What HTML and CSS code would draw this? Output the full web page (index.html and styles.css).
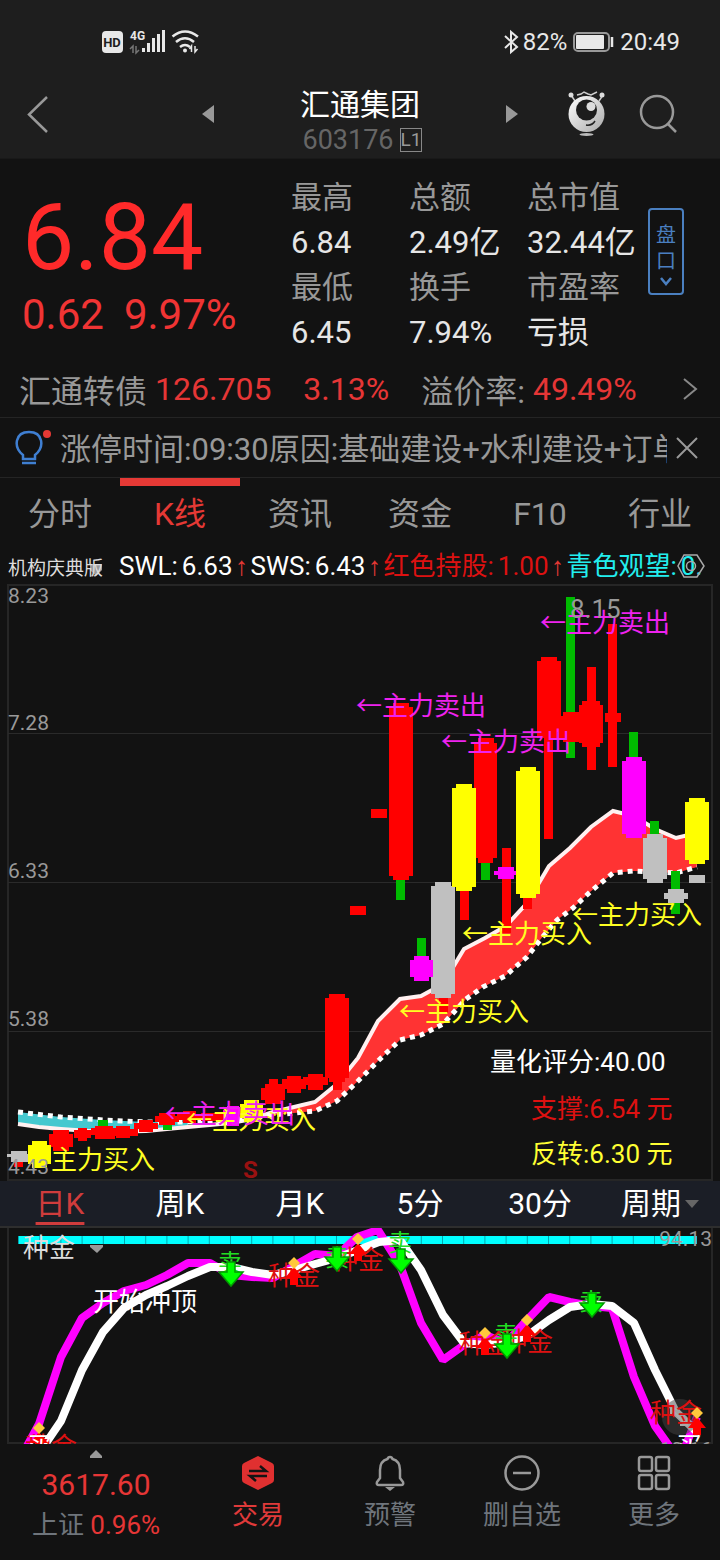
FILE: index.html
```
<!DOCTYPE html>
<html lang="zh-CN">
<head>
<meta charset="utf-8">
<meta name="viewport" content="width=device-width, initial-scale=1">
<title>汇通集团 603176</title>
<link rel="stylesheet" href="styles.css">
</head>
<body>
<header class="top">
  <div class="status">
    <svg class="status-left" width="100" height="28" viewBox="101 28 100 28" aria-hidden="true">
      <rect x="102" y="31" width="21" height="22" rx="4" fill="#e8e8e8"/>
      <text x="112" y="47" class="hd">HD</text>
      <text x="130" y="40" class="net">4G</text>
      <path d="M133 53v-7l-3 3M136 46v7l3-3" fill="none" stroke="#777" stroke-width="1.500"/>
      <path d="M143.500 52v-4M148.500 52v-9M153.500 52v-14M158.500 52v-18M163.500 52v-22" stroke="#e8e8e8" stroke-width="3"/>
      <path d="M172.500 36.500q12.500-10 25.500 0M176 42q9-7.500 18 0M180 47q5-4 10 0" fill="none" stroke="#e8e8e8" stroke-width="2.500"/>
      <circle cx="185" cy="50.500" r="2"/><path d="M191.500 52v-6l-2 3M195 46v6l2.500-3" fill="none" stroke="#e8e8e8" stroke-width="1.500"/>
    </svg>
    <div class="status-right">
      <svg width="17" height="26" viewBox="0 0 17 26" aria-hidden="true"><path d="M2 7l12 11-6 5V3l6 5L2 19" fill="none" stroke="#e8e8e8" stroke-width="2"/></svg>
      <span>82%</span>
      <svg class="battery" width="41" height="20" viewBox="0 0 41 20" aria-hidden="true"><rect x="1" y="1" width="35" height="18" rx="4" fill="none" stroke="#999" stroke-width="2"/><rect x="3" y="3" width="28" height="14" rx="1" fill="#e8e8e8"/><path d="M39 5v10" stroke="#e8e8e8" stroke-width="2.500"/></svg>
      <span>20:49</span>
    </div>
  </div>
  <div class="titlebar">
    <button class="icon back" aria-label="返回"><svg width="24" height="40" viewBox="0 0 24 40"><path d="M21 3L3 20.500 21 38" fill="none" stroke="#999" stroke-width="2.500"/></svg></button>
    <button class="icon prev" aria-label="上一只"><svg width="14" height="20" viewBox="0 0 14 20"><path d="M13 1v18L1 10z" fill="#999"/></svg></button>
    <div class="stock">
      <h1>汇通集团</h1>
      <div class="code">603176<span class="level">L1</span></div>
    </div>
    <button class="icon next" aria-label="下一只"><svg width="14" height="20" viewBox="0 0 14 20"><path d="M1 1v18l12-9z" fill="#999"/></svg></button>
    <button class="icon robot" aria-label="智能助手"><svg width="40" height="48" viewBox="0 0 40 48">
      <defs><linearGradient id="shell" x2="1" y2="1"><stop stop-color="#fff"/><stop offset="1" stop-color="#aaa"/></linearGradient></defs>
      <path d="M8 11L4 5M32 11l4-6M10 5l4-1 3-2 4 2 3 1 6-3" fill="none" stroke="#ccc" stroke-width="1.500"/>
      <circle cx="4" cy="5" r="2.500" fill="#ddd"/><circle cx="35" cy="5" r="2.500" fill="#ddd"/>
      <circle cx="19.500" cy="24" r="18" fill="url(#shell)"/><circle cx="19.500" cy="20" r="10.500" fill="#1d1d1d"/><circle cx="24" cy="16.500" r="4.500" fill="#ddd"/>
      <path d="M19 35q6 1 9-4" fill="none" stroke="#222" stroke-width="1.500"/><ellipse cx="19.500" cy="44.500" rx="7" ry="1.500" fill="#bbb"/>
    </svg></button>
    <button class="icon search" aria-label="搜索"><svg width="40" height="40" viewBox="0 0 40 40"><circle cx="18" cy="18" r="16" fill="none" stroke="#999" stroke-width="2.500"/><path d="M29 30l8 8" stroke="#999" stroke-width="2.500"/></svg></button>
  </div>
</header>

<main>
<section class="quote">
  <div class="price">
    <div class="last">6.84</div>
    <div class="change"><span>0.62</span><span>9.97%</span></div>
  </div>
  <dl class="stats">
    <div><dt>最高</dt><dd>6.84</dd></div>
    <div><dt>总额</dt><dd>2.49亿</dd></div>
    <div><dt>总市值</dt><dd>32.44亿</dd></div>
    <div><dt>最低</dt><dd>6.45</dd></div>
    <div><dt>换手</dt><dd>7.94%</dd></div>
    <div><dt>市盈率</dt><dd>亏损</dd></div>
  </dl>
  <button class="pankou"><span>盘</span><span>口</span><svg width="12" height="10" viewBox="0 0 12 10" aria-hidden="true"><path d="M1 2l5 6 5-6" fill="none" stroke="#4a7fc0" stroke-width="2.500"/></svg></button>
</section>

<a class="bond" href="#bond">
  <span>汇通转债</span><b>126.705</b><b class="rate">3.13%</b><span class="premium">溢价率:</span><b>49.49%</b>
  <svg class="chevron" width="16" height="24" viewBox="0 0 16 24" aria-hidden="true"><path d="M2 2l12 10L2 22" fill="none" stroke="#888" stroke-width="2"/></svg>
</a>

<div class="notice">
  <svg class="bulb" width="38" height="40" viewBox="0 0 38 40" aria-hidden="true"><path d="M9 31v-4C-1 19 1 4 15 4s16 15 6 23v4zM8 35h14" fill="none" stroke="#3f7fd2" stroke-width="2.500"/><circle cx="33" cy="6" r="4" fill="#e53935"/></svg>
  <p>涨停时间:09:30原因:基础建设+水利建设+订单</p>
  <button class="icon" aria-label="关闭"><svg width="24" height="24" viewBox="0 0 24 24"><path d="M2 2l20 20M22 2L2 22" stroke="#999" stroke-width="2"/></svg></button>
</div>

<nav class="tabs">
  <button>分时</button><button class="on">K线</button><button>资讯</button><button>资金</button><button>F10</button><button>行业</button>
</nav>

<div class="legend">
  <button class="scheme">机构庆典版<svg width="12" height="12" viewBox="0 0 12 12" aria-hidden="true"><path d="M0 0h12v6l-6 6-6-6z" fill="#999"/></svg></button>
  <span class="val">SWL:<i>6.63</i><em>↑</em></span>
  <span class="val">SWS:<i>6.43</i><em>↑</em></span>
  <span class="val hold">红色持股:<i>1.00</i><em>↑</em></span>
  <span class="val wait">青色观望:<i>0.</i></span>
  <button class="icon settings" aria-label="指标设置"><svg width="28" height="26" viewBox="0 0 28 26"><path d="M7 2h13l7 11-7 11H7L1 13z" fill="none" stroke="#aaa" stroke-width="1.500"/><circle cx="14" cy="13" r="4.500" fill="none" stroke="#aaa" stroke-width="1.500"/></svg></button>
</div>

<svg class="chart" viewBox="0 584 720 597" role="img" aria-label="日K线图">
  <g class="grid"><path d="M8 585h704v595H8z"/><path class="rule" d="M8 733.500h704M8 882.500h704M8 1031.500h704"/></g>
  <path fill="#ff3333" d="M188 1127L231 1123 252 1119 273 1112 294 1107 315 1102 337 1084 358 1058 378 1021 400 999 421 996 443 984 464 949 485 938 506 926 527 903 549 866 570 848 591 827 613 811 634 816 655 829 676 838 697 833V867L676 873 655 872 634 871 613 873 590 892 573 908 557 920 540 940 527 957 505 976 483 987 466 999 443 1024 421 1035 400 1040 379 1060 358 1081 337 1101 315 1111 273 1115 231 1120z"/>
  <path fill="#45c8cf" d="M18 1112L61 1117 103 1120 146 1122 188 1122V1127L146 1131 103 1132 61 1129 18 1124z"/>
  <path class="line" stroke="#fff0f0" d="M18 1124L39 1127 61 1129 103 1132 146 1131 188 1127 231 1123 252 1119 273 1112 294 1107 315 1102 337 1084 358 1058 378 1021 400 999 421 996 443 984 464 949 485 938 506 926 527 903 549 866 570 848 591 827 613 811 634 816 655 829 676 838 697 833"/>
  <path class="line dots" d="M18 1112L61 1117 103 1120 146 1122 188 1122 231 1120 273 1115 315 1111 337 1101 358 1081 379 1060 400 1040 421 1035 443 1024 466 999 483 987 505 976 527 957 540 940 557 920 573 908 590 892 613 873 634 871 655 872 676 873 697 867"/>
  <g class="axis"><text x="8" y="603">8.23</text><text x="8" y="730">7.28</text><text x="8" y="878">6.33</text><text x="8" y="1026">5.38</text></g>

  <g fill="#c0c0c0">
    <path d="M11 1151h16v3h4v8H11v-5H7v-3h4z"/>
    <path d="M435 882h16v4h4v108h-4v4h-16v-4h-4V886h4z"/>
    <path d="M647 834h16v4h4v41h-4v4h-16v-4h-4v-41h4z"/>
    <path d="M689 875h16v8h-16z"/>
  </g>
  <g fill="#ff0000">
    <path d="M14 1162h9v5h-9z"/>
    <path d="M53 1130h16v4h4v13h-4v4H53v-4h-4v-13h4zM74 1130h4v-2h9v2h4v8h-4v3h-9v-3h-4z"/>
    <path d="M91 1128h4v-2h18v2h7v7h-5v4H95v-4h-4zM112 1129h4v-3h14v3h8v7h-8v2h-14v-2h-4zM134 1123h5v-3h14v3h5v6h-5v3h-14v-3h-5z"/>
    <path d="M155 1116h4v-3h16v3h4v6h-4v3h-16v-3h-4zM177 1114h6v-3h13v3h8v6h-8v3h-13v-3h-6zM201 1113h24v8h-24z"/>
    <path d="M265 1084h4v-5h9v5h4v4h3v12h-4v4h-16v-4h-4v-12h4zM282 1079h5v-3h14v3h5v10h-5v4h-14v-4h-5zM303 1077h5v-3h15v3h5v8h-5v5h-15v-5h-5z"/>
    <path d="M329 994h16v4h4v80h-4v4h-3v8h-9v-8h-4v-4h-4v-80h4z"/>
    <path d="M350 906h16v9h-16zM371 809h16v9h-16zM393 703h16v4h4v169h-4v4h-16v-4h-4V707h4z"/>
    <path d="M478 738h16v5h3v115h-4v5h-15v-5h-4V743h4zM439 998h9v15h-9zM460 891h9v29h-9zM502 848h9v85h-9zM523 898h9v11h-9z"/>
    <path d="M541 657h16v4h4v71h-4v6h-4v101h-9V738h-7v-77h4z"/>
  </g>
  <g fill="#00bb00">
    <path d="M98 1120h10v6H98zM163 1125h9v5h-9zM396 880h9v20h-9zM417 938h9v19h-9zM481 863h9v17h-9zM566 597h9v161h-9zM629 732h9v26h-9zM650 821h9v13h-9zM671 871h9v43h-9z"/>
  </g>
  <g fill="#ff0000">
    <path d="M563 712h16v4h4v22h-4v4h-16v-4h-4v-22h4zM587 667h9v34h4v4h3v38h-3v4h-4v23h-9v-23h-5v-4h-3v-38h3v-4h5zM608 624h9v89h4v9h-4v45h-9v-45h-3v-9h3z"/>
  </g>
  <path fill="#c0c0c0" d="M668 889h16v4h4v6h-4v4h-16v-4h-4v-6h4z"/>
  <g fill="#ff00ff">
    <path d="M414 956h15v4h4v17h-4v4h-15v-4h-4v-17h4zM498 867h16v4h4v4h-4v4h-16v-4h-4v-4h4zM626 757h16v4h4v73h-4v4h-16v-4h-4v-73h4zM223 1110h4v-4h12v20h-12v-4h-4z"/>
  </g>
  <g fill="#ffff00">
    <path d="M32 1141h15v4h4v19h-4v4H32v-4h-4v-19h4zM244 1100h15v4h4v14h-4v4h-15v-4h-4v-14h4zM456 784h16v4h4v99h-4v4h-16v-4h-4v-99h4zM520 767h16v4h4v123h-4v4h-16v-4h-4V771h4zM689 798h16v4h4v58h-4v4h-16v-4h-4v-58h4z"/>
  </g>

  <g class="buy"><text x="462" y="943">←主力买入</text><text x="572" y="924">←主力买入</text><text x="399" y="1021">←主力买入</text><text x="186" y="1129">←主力买入</text><text x="51" y="1169">主力买入</text></g>
  <g class="sell"><text x="356" y="715">←主力卖出</text><text x="441" y="751">←主力卖出</text><text x="540" y="632">←主力卖出</text><text x="165" y="1123">←主力卖出</text></g>
  <text x="570" y="618" class="peak">8.15</text>
  <g class="axis"><text x="8" y="1174">4.43</text></g>
  <text x="243" y="1178" class="mark">S</text>
  <text x="490" y="1071" class="note" fill="#fff">量化评分:40.00</text>
  <text x="531" y="1118" class="note" fill="#dd1111">支撑:6.54 元</text>
  <text x="531" y="1163" class="note" fill="#ffff33">反转:6.30 元</text>
</svg>

<nav class="periods">
  <button class="on">日K</button><button>周K</button><button>月K</button><button>5分</button><button>30分</button><button>周期<svg width="14" height="8" viewBox="0 0 14 8" aria-hidden="true"><path d="M0 0h14L7 8z" fill="#666"/></svg></button>
</nav>

<svg class="chart" viewBox="0 1228 720 216" role="img" aria-label="种金指标">
  <defs>
    <path id="down" d="M-4 0h8v10h8L0 24-12 10h8z" fill="#00ff00" stroke="#009900" stroke-width="1.500"/>
    <g id="up"><path d="M0-2L9 9H4v7h-8V9h-5z" fill="#ff0000"/><path d="M0-12l6 6-6 6-6-6z" fill="#ffc83c"/></g>
  </defs>
  <g class="grid"><path d="M8 1228v215h704v-215"/></g>
  <path d="M18 1240h679" stroke="#00ffff" stroke-width="8"/>
  <path d="M18 1240h679" stroke="#00a8b0" stroke-width="8" stroke-dasharray="1 20.200"/>
  <path class="trend" stroke="#ff00ff" d="M27 1446L39 1424 61 1357 82 1318 103 1303 124 1291 146 1285 167 1275 188 1263 210 1263 231 1275 252 1277 273 1278 294 1266 315 1254 337 1256 357 1237 378 1230 400 1265 421 1323 443 1360 464 1345 485 1335 506 1343 527 1320 549 1297 570 1302 591 1306 612 1308 634 1377 655 1426 672 1450M684 1450L697 1417"/>
  <path class="trend" stroke="#ffffff" d="M44 1446L61 1421 82 1370 103 1332 124 1308 146 1295 167 1286 188 1276 210 1267 231 1267 252 1272 273 1275 294 1270 315 1264 337 1258 358 1250 379 1242 400 1240 421 1270 443 1315 464 1343 485 1345 506 1342 527 1336 549 1320 570 1307 591 1304 612 1306 634 1323 655 1370 676 1412 697 1432"/>
  <circle cx="680" cy="1417" r="18" fill="#444" opacity=".5"/>
  <path d="M671 1416v-7h7M671 1409l16 16M680 1425h7v-7" fill="none" stroke="#aaa" stroke-width="2"/>
  <g class="gold"><text x="268" y="1285">种金</text><text x="332" y="1269">种金</text><text x="459" y="1353">种金</text><text x="501" y="1351">种金</text><text x="650" y="1422">种金</text><text x="25" y="1456">种金</text></g>
  <use href="#up" x="39" y="1434"/><use href="#up" x="294" y="1269"/><use href="#up" x="358" y="1245"/><use href="#up" x="485" y="1339"/><use href="#up" x="527" y="1326"/><use href="#up" x="697" y="1419"/>
  <g class="out"><text x="230" y="1271">卖</text><text x="337" y="1266">卖</text><text x="400" y="1251">卖</text><text x="506" y="1343">卖</text><text x="591" y="1310">卖</text></g>
  <use href="#down" x="231" y="1262"/><use href="#down" x="337" y="1247"/><use href="#down" x="401" y="1249"/><use href="#down" x="507" y="1334"/><use href="#down" x="592" y="1293"/>
  <text x="93" y="1311" class="note" fill="#fff">开始冲顶</text>
  <text x="27" y="1456" class="note" fill="#fff">买</text><text x="676" y="1456" class="note" fill="#fff">买</text>
  <text x="23" y="1257" class="note" fill="#ddd">种金</text>
  <path d="M90 1245h13v2l-6 6-7-6z" fill="#999"/>
  <g class="axis end"><text x="712" y="1246">94.13</text><text x="712" y="1457">10.16</text></g>
</svg>
</main>

<footer class="dock">
  <button class="index">
    <svg width="12" height="8" viewBox="0 0 12 8" aria-hidden="true"><path d="M6 0l6 6v2H0V6z" fill="#999"/></svg>
    <span class="points">3617.60</span>
    <span class="pct">上证 <b>0.96%</b></span>
  </button>
  <button class="trade"><svg width="36" height="36" viewBox="0 0 36 36" aria-hidden="true"><path d="M18 1l14 7q2 1 2 3v14q0 2-2 3l-14 7-14-7q-2-1-2-3V11q0-2 2-3z" fill="#e03030"/><path d="M9 16h17l-6-5M27 21H10l6 5" fill="none" stroke="#141414" stroke-width="2.500"/></svg><span>交易</span></button>
  <button><svg width="36" height="36" viewBox="0 0 36 36" aria-hidden="true"><path d="M18 2q-2 0-2.500 2Q8 6 8 15v8l-3 4q-1 3 2 3h22q3 0 2-3l-3-4v-8q0-9-7.500-11-.5-2-2.500-2z" fill="none" stroke="#999" stroke-width="2.500"/><path d="M13 32h10l-5 4z" fill="#999"/></svg><span>预警</span></button>
  <button><svg width="36" height="36" viewBox="0 0 36 36" aria-hidden="true"><circle cx="18" cy="18" r="16.500" fill="none" stroke="#999" stroke-width="2.500"/><path d="M9 18h18" stroke="#999" stroke-width="2.500"/></svg><span>删自选</span></button>
  <button><svg width="36" height="36" viewBox="0 0 36 36" aria-hidden="true"><g fill="none" stroke="#999" stroke-width="2.500"><rect x="3" y="2" width="13" height="14" rx="2"/><rect x="20" y="2" width="13" height="14" rx="2"/><rect x="3" y="20" width="13" height="14" rx="2"/><rect x="20" y="20" width="13" height="14" rx="2"/></g></svg><span>更多</span></button>
</footer>
</body>
</html>
```

FILE: styles.css
```
* { box-sizing: border-box; }
body { margin: 0; background: #121212; color: #989898; font-family: Roboto, "Noto Sans CJK SC", sans-serif; font-size: 32px; }
button { padding: 0; border: 0; background: none; color: inherit; font: inherit; }
svg { display: block; flex: none; }
h1, p, dl, dd { margin: 0; }
b, i, em { font-weight: 400; font-style: normal; }

.top { background: #1e1e1e; border-bottom: 1px solid #191919; }
.status { display: flex; justify-content: space-between; align-items: center; height: 84px; padding: 0 40px 0 101px; }
.status-left { fill: #e8e8e8; }
.hd { font-size: 13px; font-weight: 700; fill: #1e1e1e; text-anchor: middle; }
.net { font-size: 12px; font-weight: 700; }
.status-right { display: flex; align-items: center; color: #e8e8e8; font-size: 24px; line-height: 28px; gap: 3px; }
.battery { margin: 0 3px; }
.titlebar { display: flex; align-items: center; height: 74px; padding: 0 41px 14px 26px; }
.icon { display: flex; align-items: center; justify-content: center; }
.prev { margin-left: auto; }
.stock { width: 290px; padding-top: 12px; text-align: center; }
.stock h1 { color: #fff; font-size: 30px; font-weight: 400; line-height: 40px; }
.code { display: flex; justify-content: center; align-items: center; gap: 6px; padding-left: 4px; color: #666; font-size: 27px; line-height: 30px; }
.level { width: 22px; border: 1px solid #888; color: #999; font-size: 19px; line-height: 22px; }
.robot { margin-left: 48px; }
.search { margin-left: 32px; }

.quote { display: grid; grid-template-columns: 291fr 357fr 72fr; padding: 16px 0 1px; }
.price { padding: 18px 0 0 22px; color: #ff2a2a; }
.last { font-size: 93px; line-height: 90px; }
.change { display: flex; gap: 20px; margin-top: 10px; font-size: 42px; line-height: 44px; color: #f03434; }
.stats { display: grid; grid-template-columns: 118fr 118fr 121fr; font-size: 31px; line-height: 45px; white-space: nowrap; }
.stats dd { color: #e6e6e6; }
.pankou { display: flex; flex-direction: column; align-items: center; width: 36px; height: 87px; margin-top: 33px; padding-top: 12px; border: 2px solid #4a7fc0; border-radius: 4px; color: #4a7fc0; font-size: 20px; line-height: 26px; }
.pankou svg { margin-top: 2px; }
.bond { display: flex; align-items: center; height: 62px; padding: 4px 22px 0 19px; border-bottom: 1px solid #242424; color: inherit; text-decoration: none; white-space: nowrap; }
.bond b { margin-left: 8px; color: #e63636; }
.bond .rate { margin-left: 32px; }
.premium { margin-left: 32px; }
.chevron { margin-left: auto; }

.notice { display: flex; align-items: center; height: 60px; padding: 0 21px 0 14px; border-bottom: 1px solid #242424; }
.bulb { margin-right: 8px; }
.notice p { flex: 1; overflow: hidden; margin-right: 8px; padding-top: 4px; font-size: 31px; line-height: 46px; white-space: nowrap; }

.tabs, .periods { display: grid; grid-template-columns: repeat(6, 1fr); }
.tabs button { height: 70px; padding-bottom: 6px; border-top: 8px solid transparent; line-height: 54px; }
.tabs .on { border-color: #e53935; color: #e53935; }

.legend { position: relative; display: flex; align-items: center; height: 36px; padding-left: 8px; color: #fff; font-size: 26px; white-space: nowrap; overflow: hidden; }
.scheme { position: relative; margin-right: 16px; color: #ddd; font-size: 19px; }
.scheme svg { position: absolute; right: 1px; bottom: 4px; z-index: -1; }
.val { display: flex; line-height: 36px; }
.val i { margin-left: 4px; }
.val em { display: flex; justify-content: center; width: 18px; color: #e53935; font-family: "Liberation Sans", sans-serif; }
.hold { color: #dd1111; }
.wait { color: #22eeee; }
.settings { position: absolute; right: 15px; top: 5px; }

.chart { width: 100%; height: auto; }
.grid path { fill: none; stroke: #262626; stroke-width: 2; }
.grid .rule { stroke: #2a2a2a; stroke-width: 1; }
.line { fill: none; stroke-width: 4; }
.dots { stroke: #fff; stroke-width: 5; stroke-dasharray: 5 5; }
.axis { fill: #999; font-size: 21px; }
.end { text-anchor: end; }
.sell { fill: #ee22ee; font-size: 26px; font-family: "Noto Sans CJK SC", sans-serif; }
.buy { fill: #ffff22; font-size: 26px; font-family: "Noto Sans CJK SC", sans-serif; }
.peak { fill: #999; font-size: 26px; }
.mark { fill: #991111; font-size: 24px; font-weight: 700; }
.note { font-size: 26px; }
.gold { fill: #dd1111; font-size: 26px; }
.out { fill: #22dd22; font-size: 24px; text-anchor: middle; }
.trend { fill: none; stroke-width: 8; stroke-linejoin: bevel; }

.periods { background: #1b1e26; color: #fff; font-size: 30px; border-bottom: 2px solid #2e2e2e; }
.periods button { display: flex; justify-content: center; align-items: center; height: 45px; line-height: 44px; }
.periods .on { color: #d03c3c; text-decoration: underline; text-decoration-thickness: 3px; text-underline-offset: 8px; }
.periods svg { margin-left: 4px; }

.dock { display: grid; grid-template-columns: 192fr 132fr 132fr 132fr 132fr; height: 116px; color: #6f757c; font-size: 26px; }
.dock button { display: flex; flex-direction: column; align-items: center; padding-top: 11px; }
.dock button span { line-height: 36px; margin-top: 6px; }
.dock .index { padding-top: 6px; }
.dock .index .points { margin-top: 9px; color: #e63636; font-size: 30px; }
.dock .index .pct { margin-top: 4px; }
.pct b { color: #e63636; }
.dock .trade { color: #e03a3a; }
```
